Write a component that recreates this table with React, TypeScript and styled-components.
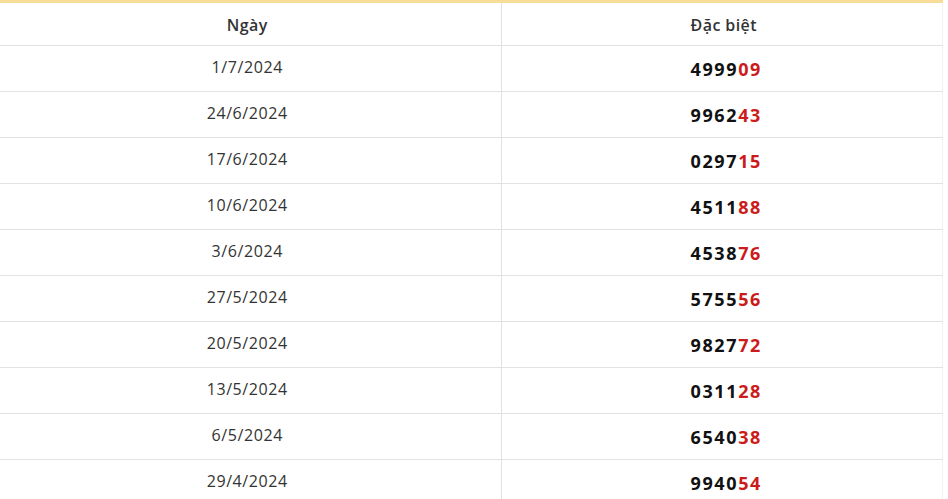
import React from "react";
import styled, { createGlobalStyle } from "styled-components";

const Global = createGlobalStyle`
  html, body { margin: 0; padding: 0; background: #fff; overflow: hidden; }
  body { font-family: "Open Sans", "Noto Sans", sans-serif; }
`;

const Wrap = styled.div`
  width: 949px;
  margin-left: -6px;
  border-top: 3px solid #f8dd98;
`;

const Table = styled.table`
  width: 100%;
  border-collapse: collapse;
  table-layout: fixed;
`;

const HeadCell = styled.th`
  height: 40px;
  padding: 2px 0 0;
  font-size: 16px;
  font-weight: 600;
  letter-spacing: 0.4px;
  color: #333;
  text-align: center;
  border-bottom: 1px solid #e2e2e2;
  border-right: 1px solid #e2e2e2;
  &:last-child { border-right: 1px solid #f1f1f1; padding-left: 4px; }
`;

const Row = styled.tr`
  height: 46px;
`;

const DateCell = styled.td`
  padding: 0 0 4px;
  font-size: 16px;
  letter-spacing: 0.6px;
  color: #333;
  text-align: center;
  border-bottom: 1px solid #e2e2e2;
  border-right: 1px solid #e2e2e2;
`;

const NumCell = styled.td`
  padding: 1px 0 0 9px;
  text-align: center;
  font-size: 18px;
  font-weight: 700;
  color: #111;
  letter-spacing: 1.6px;
  border-bottom: 1px solid #e2e2e2;
  border-right: 1px solid #f1f1f1;
`;

const Tail = styled.span`
  color: #cc1b1b;
`;

const data: [string, string][] = [
  ["1/7/2024", "499909"],
  ["24/6/2024", "996243"],
  ["17/6/2024", "029715"],
  ["10/6/2024", "451188"],
  ["3/6/2024", "453876"],
  ["27/5/2024", "575556"],
  ["20/5/2024", "982772"],
  ["13/5/2024", "031128"],
  ["6/5/2024", "654038"],
  ["29/4/2024", "994054"],
];

export default function App() {
  return (
    <>
      <Global />
      <Wrap>
        <Table>
          <colgroup>
            <col style={{ width: 507 }} />
            <col />
          </colgroup>
          <thead>
            <tr>
              <HeadCell>Ngày</HeadCell>
              <HeadCell>Đặc biệt</HeadCell>
            </tr>
          </thead>
          <tbody>
            {data.map(([d, n]) => (
              <Row key={d}>
                <DateCell>{d}</DateCell>
                <NumCell>
                  {n.slice(0, 4)}
                  <Tail>{n.slice(4)}</Tail>
                </NumCell>
              </Row>
            ))}
          </tbody>
        </Table>
      </Wrap>
    </>
  );
}
